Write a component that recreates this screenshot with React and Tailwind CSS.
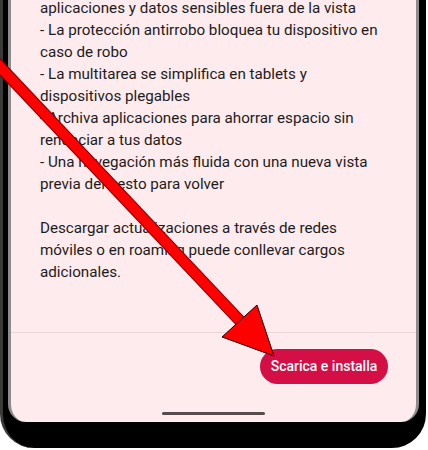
import React from "react";

const LINES = [
  "aplicaciones y datos sensibles fuera de la vista",
  "- La protección antirrobo bloquea tu dispositivo en",
  "caso de robo",
  "- La multitarea se simplifica en tablets y",
  "dispositivos plegables",
  "- Archiva aplicaciones para ahorrar espacio sin",
  "renunciar a tus datos",
  "- Una navegación más fluida con una nueva vista",
  "previa del gesto para volver",
];

const NOTE = [
  "Descargar actualizaciones a través de redes",
  "móviles o en roaming puede conllevar cargos",
  "adicionales.",
];

const Arrow = () => (
  <svg
    className="absolute left-0 top-0 pointer-events-none"
    width="428"
    height="450"
    viewBox="0 0 428 450"
  >
    <line
      x1="-12"
      y1="54"
      x2="242"
      y2="323"
      stroke="#7a0000"
      strokeWidth="12"
    />
    <line
      x1="-12"
      y1="54"
      x2="242"
      y2="323"
      stroke="#ff0000"
      strokeWidth="10"
    />
    <polygon
      points="274,356 222,337 257,305"
      fill="#ff0000"
      stroke="#1a0000"
      strokeWidth="1"
      strokeLinejoin="miter"
    />
  </svg>
);

export default function App() {
  return (
    <div
      className="relative w-[428px] h-[450px] bg-white overflow-hidden"
      style={{ fontFamily: "Roboto, 'Noto Sans', sans-serif" }}
    >
      <div className="w-[426px] h-[448px] bg-black border-l-[3px] border-[#3a3a3a] rounded-b-[34px] pl-[5px]">
        <div className="w-[411px] h-[422px] bg-[#fdebed] border-x-[3px] border-[#8c8c8c] rounded-b-[18px] flex flex-col overflow-hidden">
          <div className="-mt-[3px] pl-[29px] text-[15.2px] leading-[22px] text-[#1e1b1c]">
            {LINES.map((l) => (
              <div key={l} className="whitespace-nowrap">
                {l}
              </div>
            ))}
            <div className="h-[22px]" />
            {NOTE.map((l) => (
              <div key={l} className="whitespace-nowrap">
                {l}
              </div>
            ))}
          </div>
          <div className="mt-[49px] h-px shrink-0 bg-[#efd3d7]" />
          <div className="flex justify-end pr-[28px] pt-[16px]">
            <button className="w-[128px] h-[35px] rounded-full bg-[#d30f46] text-white text-[14px] font-medium">
              Scarica e installa
            </button>
          </div>
          <div className="flex justify-center pt-[28px]">
            <div className="w-[103px] h-[3px] rounded-full bg-[#574b4d]" />
          </div>
        </div>
      </div>
      <Arrow />
    </div>
  );
}
